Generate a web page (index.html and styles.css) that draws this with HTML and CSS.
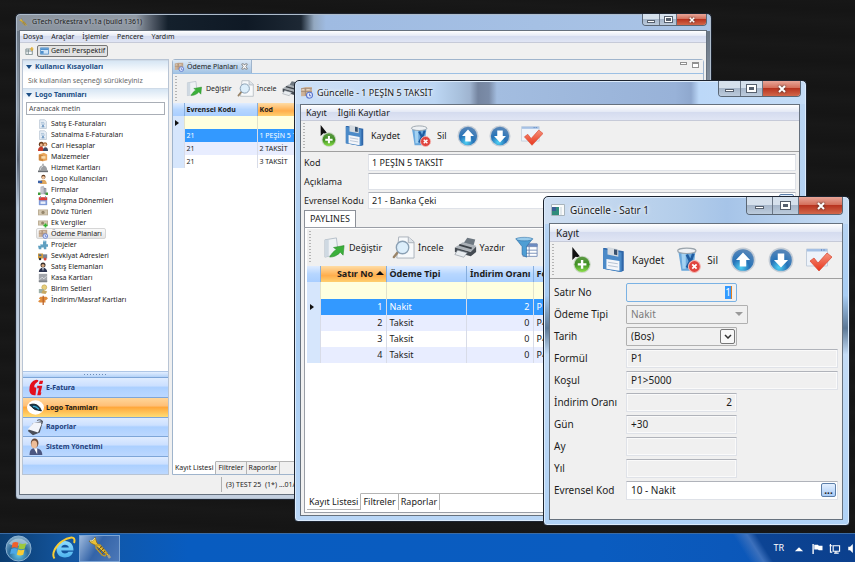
FILE: index.html
```html
<!DOCTYPE html>
<html lang="tr">
<head>
<meta charset="utf-8">
<title>GTech Orkestra v1.1a (build 1361)</title>
<link rel="stylesheet" href="styles.css">
</head>
<body>
<svg class="defs" aria-hidden="true">
  <defs>
    <radialGradient id="gOrb" cx=".4" cy=".85" r=".8"><stop offset="0" stop-color="#4fd0f4"/><stop offset=".5" stop-color="#2673b8"/><stop offset="1" stop-color="#5585b8"/></radialGradient>
    <linearGradient id="gGreen" x1="0" y1="0" x2="0" y2="1"><stop offset="0" stop-color="#5d9a45"/><stop offset=".5" stop-color="#3f8f22"/><stop offset="1" stop-color="#8ade4a"/></linearGradient>
    <linearGradient id="gRed" x1="0" y1="0" x2="0" y2="1"><stop offset="0" stop-color="#f5917c"/><stop offset="1" stop-color="#e8361c"/></linearGradient>
    <radialGradient id="gStart" cx=".5" cy=".75" r=".7"><stop offset="0" stop-color="#62c6e8"/><stop offset=".55" stop-color="#2c6c9c"/><stop offset="1" stop-color="#7fa9c6"/></radialGradient>
    <linearGradient id="gE" x1="0" y1="0" x2="0" y2="1"><stop offset="0" stop-color="#8fdcff"/><stop offset="1" stop-color="#4fb4ee"/></linearGradient>
  </defs>
  <symbol id="i-new" viewBox="0 0 24 24"><path d="M4 0v12l3-3 5 1z" fill="#111"/><circle cx="13" cy="16" r="8" fill="#c9d6c4"/><circle cx="13" cy="16" r="7" fill="url(#gGreen)"/><path d="M13 12v8M9 16h8" stroke="#fff" stroke-width="2.2"/></symbol>
  <symbol id="i-save" viewBox="0 0 24 24"><path d="M2 1h2l17 3v18l-3 1L2 20z" fill="#2f66a8"/><path d="M2 2l17 3v18L2 20z" fill="#4b8ac8"/><path d="M6 0l10 2v7L6 7z" fill="#d4dae0"/><path d="M12 2l3 .5v5l-3-.5z" fill="#38506c"/><path d="M5 11l12 2v9L5 20z" fill="#f4f6fa"/><path d="M6.500 14l9 1.500M6.500 17l9 1.500" stroke="#b8c4d4"/></symbol>
  <symbol id="i-trash" viewBox="0 0 24 24"><path d="M2 3h16l-2 19H5z" fill="#6aa8dc"/><path d="M5 6h4v14H6z" fill="#a4d2f2"/><path d="M10 7l3 6-3 6M16 6l-4 12" stroke="#1f5ca0" stroke-width="2.400" fill="none"/><ellipse cx="10" cy="3.500" rx="8.500" ry="2.500" fill="#eef1f4" stroke="#9aa4ac"/><circle cx="17" cy="18" r="5.500" fill="#e0443e" stroke="#f4b8b4"/><path d="M15 16l4 4M19 16l-4 4" stroke="#fff" stroke-width="1.600"/></symbol>
  <symbol id="i-up" viewBox="0 0 24 24"><circle cx="12" cy="12" r="11.500" fill="#c5cdd6"/><circle cx="12" cy="12" r="10" fill="url(#gOrb)"/><path d="M12 5l6.500 7H15v6H9v-6H5.500z" fill="#fff"/></symbol>
  <symbol id="i-down" viewBox="0 0 24 24"><circle cx="12" cy="12" r="11.500" fill="#c5cdd6"/><circle cx="12" cy="12" r="10" fill="url(#gOrb)"/><path d="M12 19l6.500-7H15V6H9v6H5.500z" fill="#fff"/></symbol>
  <symbol id="i-check" viewBox="0 0 26 24"><path d="M.5 1h21v17H.5z" fill="#eef3fa" stroke="#c3cedc"/><path d="M1 1h20v2.500H1z" fill="#a5c0e4"/><path d="M15 2h1M17.500 2h1" stroke="#3c6db0"/><path d="M4 13l4-3 4 5 9-10 5 4-13 14z" fill="url(#gRed)" stroke="#d8452e" stroke-width=".7"/></symbol>
  <symbol id="i-edit" viewBox="0 0 24 24"><path d="M2 4l12-2 2 17-14 3z" fill="#eff2f5" stroke="#b4bec8"/><path d="M2 4h4v17l-4 1z" fill="#cfd9e2"/><path d="M7 22c2-4 4-6 7-8l-3-2 11-2-1 10-3-3c-3 3-6 5-11 5z" fill="#3bb03a" stroke="#2a8a2c" stroke-width=".6"/></symbol>
  <symbol id="i-view" viewBox="0 0 24 24"><path d="M7 1h10l6 5v17H5z" fill="#f7f9fb" stroke="#a9b1ba"/><path d="M17 1v6h6" fill="#dde3e9" stroke="#a9b1ba"/><path d="M6 17l-4 5" stroke="#9a8468" stroke-width="2.500" stroke-linecap="round"/><circle cx="11" cy="12" r="6.500" fill="#d8ecfb" fill-opacity=".9" stroke="#8aa0b4" stroke-width="1.400"/></symbol>
  <symbol id="i-print" viewBox="0 0 26 24"><path d="M11 7l4-6 9 2-2 7z" fill="#6d7780"/><path d="M1 12l9-6 15 4-5 7z" fill="#aab0b6"/><path d="M6 9l14 4" stroke="#3b4147" stroke-width="2"/><path d="M1 12l18 5 6-6v6l-6 5-18-5z" fill="#454b52"/><path d="M4 15l11 3-4 5-10-3z" fill="#e8ecef" stroke="#88919a" stroke-width=".7"/></symbol>
  <symbol id="i-filter" viewBox="0 0 26 24"><path d="M9 8h16v14H9z" fill="#fff" stroke="#7088b4"/><path d="M9 8h16v3H9zM9 15h16M9 18.500h16M16 8v14" fill="#6b8cc4" stroke="#7088b4"/><path d="M1 2h19l-7 9v12l-5-3v-9z" fill="#4f9ed4" stroke="#2a6ca4" stroke-width=".7"/><ellipse cx="10.500" cy="2.500" rx="9.500" ry="2" fill="#9accec" stroke="#2a6ca4" stroke-width=".6"/></symbol>
  <symbol id="i-plan" viewBox="0 0 12 12"><path d="M1 2l4-1h6v8l-10 .500z" fill="#cdb196"/><path d="M1 5h10M5 2v7M1 2.500h10" stroke="#9c8470" stroke-width=".7"/><path d="M2 3h2v1H2zM6 3h3v1H6z" fill="#f0e4d4"/><circle cx="8.800" cy="8.500" r="2.800" fill="#dfe6fa" stroke="#5c78d0"/><path d="M8.800 7v2h1.500" stroke="#3c58b8" stroke-width=".7" fill="none"/></symbol>
  <symbol id="i-doc" viewBox="0 0 12 12"><path d="M2 1h6l2 2v8.500H2z" fill="#eef4fa" stroke="#a8b8c8" stroke-width=".8"/><path d="M3.500 4h4M3.500 6h5M3.500 9.500h5" stroke="#9ab6d0"/><path d="M5 7h2v3H5z" fill="#6b95c0"/></symbol>
  <symbol id="i-people" viewBox="0 0 12 12"><circle cx="4" cy="4" r="3" fill="#6b3c1c"/><circle cx="4" cy="4.700" r="1.700" fill="#f0b890"/><circle cx="8.500" cy="4" r="2.500" fill="#a4622e"/><circle cx="8.500" cy="4.600" r="1.500" fill="#f2c49c"/><path d="M0 12c0-4 2-5 4-5s3 2 3 5z" fill="#c83c2c"/><path d="M6 12c0-3 1-4.500 3-4.500s3 1.500 3 4.500z" fill="#3c4a64"/></symbol>
  <symbol id="i-box" viewBox="0 0 12 12"><path d="M1 3l6-2 4 2v7l-5 1-5-1z" fill="#e9a55c"/><path d="M1 3l5 1v7l-5-1z" fill="#cc8840"/><path d="M4 5h5v3H4z" fill="#f8dcb0"/></symbol>
  <symbol id="i-bell" viewBox="0 0 12 12"><path d="M1 9c0-4 2-6 5-6s5 2 5 6z" fill="#9a9ea2"/><path d="M3 8c0-2 1-4 3-4" stroke="#e4e6e8" fill="none"/><path d="M0 9h12v2H0z" fill="#6a6e73"/><path d="M5.500 1h1v2h-1z" fill="#55595e"/></symbol>
  <symbol id="i-user" viewBox="0 0 12 12"><circle cx="6.500" cy="3.500" r="2.500" fill="#5e3a20"/><circle cx="6.500" cy="4.200" r="1.900" fill="#f0c49c"/><path d="M2 12c0-4 2-5 4.500-5s4 2 4 5z" fill="#e0a860"/><path d="M0 8h5v3H0z" fill="#3c62a8"/></symbol>
  <symbol id="i-firm" viewBox="0 0 12 12"><path d="M3 2l4-1v10H3z" fill="#b4b6c0"/><path d="M7 3l3 1v7H7z" fill="#8e909c"/><path d="M4 3v7M5.500 3v7M8.500 5v5" stroke="#dfe0e8" stroke-width=".6"/><path d="M0 9h3v3H0zM9 9h3v3H9z" fill="#3f9a3a"/></symbol>
  <symbol id="i-cal" viewBox="0 0 12 12"><path d="M1 2h10v9H1z" fill="#7e9ad8"/><path d="M1 1.500h10v3.500H1z" fill="#de3c36"/><path d="M3 6.500h6v3H3z" fill="#e8eefa"/><path d="M3 0v3M9 0v3" stroke="#8c8c98"/></symbol>
  <symbol id="i-money" viewBox="0 0 12 12"><path d="M0 3h12v7H0z" fill="#b9ab92"/><path d="M1 4h10v5H1z" fill="#d5c9b2"/><circle cx="6" cy="6.500" r="2" fill="#96866c"/></symbol>
  <symbol id="i-moneyadd" viewBox="0 0 12 12"><path d="M0 3h12v6H0z" fill="#b9ab92"/><path d="M1 4h10v4H1z" fill="#d5c9b2"/><circle cx="5.500" cy="6" r="1.800" fill="#96866c"/><path d="M9 6.500v5M6.500 9h5" stroke="#2fb32c" stroke-width="2"/></symbol>
  <symbol id="i-puzzle" viewBox="0 0 12 12"><path d="M0 7h3V5h3V1h4v4h2v3h-2v3H7V9H4v2H1z" fill="#5f9fc0"/><path d="M6 1.500h3M3 5.500h3" stroke="#a8d0e4"/></symbol>
  <symbol id="i-truck" viewBox="0 0 12 12"><path d="M0 3h6v6H0z" fill="#d09a3a"/><path d="M6 4h5v5H6z" fill="#7c8494"/><path d="M1 4h3v2H1z" fill="#4c6c9c"/><circle cx="2.500" cy="9.500" r="1.500" fill="#333"/><circle cx="8.500" cy="9.500" r="1.800" fill="#d8483c"/></symbol>
  <symbol id="i-agent" viewBox="0 0 12 12"><circle cx="6" cy="3.500" r="3" fill="#3a302c"/><circle cx="6" cy="4.200" r="1.900" fill="#d8a880"/><path d="M1 12c0-3 2-5 5-5s5 2 5 5z" fill="#2c3450"/><path d="M5 7h2l-1 4z" fill="#e8ecf4"/></symbol>
  <symbol id="i-safe" viewBox="0 0 12 12"><path d="M1 1h10v10H1z" fill="#a3a6ac"/><path d="M2 8l3-3 2 2 3-3" stroke="#e4e6ea" fill="none"/><path d="M1 9h10v2H1z" fill="#80848a"/></symbol>
  <symbol id="i-units" viewBox="0 0 12 12"><circle cx="7.500" cy="4" r="3" fill="#e8cf7c" stroke="#b49848" stroke-width=".6"/><path d="M1 6h6v5H1z" fill="#9db0a8"/><path d="M6 7l5 2-2 3-5-1z" fill="#c8a860"/></symbol>
  <symbol id="i-sign" viewBox="0 0 12 12"><path d="M1 4l2-2h7l2 2-2 2H3zM0 7.500l2-1.500h7v3H2z" fill="#e08c3c"/><path d="M5.500 1h1.500v11H5.500z" fill="#b8622c"/></symbol>
  <symbol id="i-trumpet" viewBox="0 0 24 24"><path d="M1 5c3 1 6-1 6-4 1 2 1 4 2 6l12 12-1 1L7 9C5 8 2 7 1 5z" fill="#e8c038" stroke="#7a5c14" stroke-width=".6"/><path d="M2 5c2 0 4-1 5-3" stroke="#fff0a0" fill="none"/><path d="M8 9l4 0 7 8-2 3-3-1-6-7z" fill="none" stroke="#c29a28" stroke-width="1.300"/><path d="M10 14l4-4M12 16l4-4M14 18l3-3" stroke="#7a5c14"/><path d="M20 19l2 3" stroke="#a8a48c" stroke-width="2.500"/></symbol>
</svg>

<main class="desktop">
  <section class="window main-win" aria-label="GTech Orkestra">
    <header class="titlebar">
      <svg class="ticon"><use href="#i-trumpet"/></svg>
      <h1>GTech Orkestra v1.1a (build 1361)</h1>
      <div class="caption"><button aria-label="Küçült"><i class="min"></i></button><button aria-label="Büyüt"><i class="max"></i></button><button class="close" aria-label="Kapat"><svg viewBox="0 0 10 8"><path d="M2 1l6 6M8 1L2 7"/></svg></button></div>
    </header>
    <div class="client">
      <nav class="menubar"><button>Dosya</button><button>Araçlar</button><button>İşlemler</button><button>Pencere</button><button>Yardım</button></nav>
      <div class="perspectives">
        <button class="persp-add" aria-label="Perspektif aç"><svg viewBox="0 0 10 10"><path d="M.5 2.500h8v7h-8zM.5 5h8M3.500 3v6" fill="#f6f9fc" stroke="#6d7f80"/><path d="M8 0v5M5.500 2.500h4.500" stroke="#e8b02c" stroke-width="1.500"/></svg></button>
        <button class="persp-on"><svg viewBox="0 0 10 8"><path d="M.5.5h9v7h-9z" fill="#cfe4f8" stroke="#5c94c8"/><path d="M1 1h8v2H1zM1 4h3v3H1z" fill="#4f90cc"/></svg>Genel Perspektif</button>
      </div>
      <div class="workbench">
        <aside class="sidebar">
          <h2>Kullanıcı Kısayolları</h2>
          <p>Sık kullanılan seçeneği sürükleyiniz</p>
          <h2>Logo Tanımları</h2>
          <input class="search" type="text" aria-label="Ara" placeholder="Aranacak metin">
          <ul class="tree">
            <li><a href="#"><svg><use href="#i-doc"/></svg>Satış E-Faturaları</a></li>
            <li><a href="#"><svg><use href="#i-doc"/></svg>Satınalma E-Faturaları</a></li>
            <li><a href="#"><svg><use href="#i-people"/></svg>Cari Hesaplar</a></li>
            <li><a href="#"><svg><use href="#i-box"/></svg>Malzemeler</a></li>
            <li><a href="#"><svg><use href="#i-bell"/></svg>Hizmet Kartları</a></li>
            <li><a href="#"><svg><use href="#i-user"/></svg>Logo Kullanıcıları</a></li>
            <li><a href="#"><svg><use href="#i-firm"/></svg>Firmalar</a></li>
            <li><a href="#"><svg><use href="#i-cal"/></svg>Çalışma Dönemleri</a></li>
            <li><a href="#"><svg><use href="#i-money"/></svg>Döviz Türleri</a></li>
            <li><a href="#"><svg><use href="#i-moneyadd"/></svg>Ek Vergiler</a></li>
            <li><a href="#" class="on"><svg><use href="#i-plan"/></svg>Ödeme Planları</a></li>
            <li><a href="#"><svg><use href="#i-puzzle"/></svg>Projeler</a></li>
            <li><a href="#"><svg><use href="#i-truck"/></svg>Sevkiyat Adresleri</a></li>
            <li><a href="#"><svg><use href="#i-agent"/></svg>Satış Elemanları</a></li>
            <li><a href="#"><svg><use href="#i-safe"/></svg>Kasa Kartları</a></li>
            <li><a href="#"><svg><use href="#i-units"/></svg>Birim Setleri</a></li>
            <li><a href="#"><svg><use href="#i-sign"/></svg>İndirim/Masraf Kartları</a></li>
          </ul>
          <div class="grip"></div>
          <nav class="stack">
            <button><svg viewBox="0 0 20 20"><path d="M11 1c2 0 3 1 2 2-4 3-5 5-4 7h2l-1 9c-5 1-8-3-7-8 0-5 3-9 8-10z" fill="#e30f1c"/><path d="M12 8h6l-2 8h1l-1 3h-4l2-8h-2zM15 2h4l-1 4h-4z" fill="#e30f1c"/></svg>E-Fatura</button>
            <button class="on"><svg viewBox="0 0 20 20"><ellipse cx="10" cy="10" rx="10" ry="8.500" fill="#fff"/><path d="M3 7c4-2 9-1 12 3l2 4-5-1C8 13 6 9 3 7z" fill="#173a50" stroke="#101c24"/><path d="M7 9c3-1 5 1 7 3" stroke="#3ab0d8" stroke-width="1.500" fill="none"/></svg>Logo Tanımları</button>
            <button><svg viewBox="0 0 20 20"><path d="M1 14l6-9 12-3-4 14-8 3z" fill="#4a4e58"/><path d="M1 12l7-8 10 0-5 12z" fill="#f3f5fa"/><path d="M12 2c2-2 5-1 6 1l-1 3" stroke="#5a5e68" stroke-width="1.300" fill="none"/></svg>Raporlar</button>
            <button><svg viewBox="0 0 20 20"><path d="M3 20c0-6 2-8 7-8s8 3 8 8z" fill="#4b5680"/><path d="M8 12h4v7z" fill="#fff"/><ellipse cx="9" cy="6" rx="4.500" ry="5.500" fill="#6a4a38"/><ellipse cx="8.500" cy="7.500" rx="3.500" ry="4.500" fill="#eebd98"/></svg>Sistem Yönetimi</button>
            <div class="rest"></div>
          </nav>
        </aside>
        <section class="editor">
          <div class="etabs">
            <div class="etab"><svg><use href="#i-plan"/></svg><span>Ödeme Planları</span><button aria-label="Sekmeyi kapat"><svg viewBox="0 0 8 8"><path d="M1 1l2 0 1 1.500L5 1h2v1L5.500 4 7 6v1H5L4 5.500 3 7H1V6l1.500-2L1 2z"/></svg></button></div>
            <div class="pane-btns"><i></i><i class="big"></i></div>
          </div>
          <div class="toolbar">
            <button><svg><use href="#i-edit"/></svg>Değiştir</button>
            <button><svg><use href="#i-view"/></svg>İncele</button>
            <button aria-label="Yazdır"><svg><use href="#i-print"/></svg></button>
          </div>
          <div class="gridwrap">
            <table class="grid">
              <colgroup><col class="c-g"><col class="c-1"><col></colgroup>
              <thead><tr><th></th><th>Evrensel Kodu</th><th class="sorted">Kod</th></tr></thead>
              <tbody>
                <tr class="filter"><td class="cur"></td><td></td><td></td></tr>
                <tr class="sel"><td></td><td>21</td><td>1 PEŞİN 5 TAKSİT</td></tr>
                <tr class="alt"><td></td><td>21</td><td>2 TAKSİT</td></tr>
                <tr><td></td><td>21</td><td>3 TAKSİT</td></tr>
              </tbody>
            </table>
          </div>
          <nav class="btabs"><button class="on">Kayıt Listesi</button><button>Filtreler</button><button>Raporlar</button></nav>
        </section>
      </div>
      <footer class="status"><span>(3) TEST 25&nbsp; (1*) ...01/01</span></footer>
    </div>
  </section>

  <section class="window plan-win" aria-label="Güncelle - 1 PEŞİN 5 TAKSİT">
    <header class="titlebar">
      <svg class="ticon"><use href="#i-plan"/></svg>
      <h1>Güncelle - 1 PEŞİN 5 TAKSİT</h1>
      <div class="caption"><button aria-label="Küçült"><i class="min"></i></button><button aria-label="Büyüt"><i class="max"></i></button><button class="close" aria-label="Kapat"><svg viewBox="0 0 10 8"><path d="M2 1l6 6M8 1L2 7"/></svg></button></div>
    </header>
    <div class="client">
      <nav class="menubar"><button>Kayıt</button><button>İlgili Kayıtlar</button></nav>
      <div class="toolbar">
        <button aria-label="Yeni"><svg><use href="#i-new"/></svg></button>
        <button><svg><use href="#i-save"/></svg>Kaydet</button>
        <button><svg><use href="#i-trash"/></svg>Sil</button>
        <button aria-label="Önceki"><svg><use href="#i-up"/></svg></button>
        <button aria-label="Sonraki"><svg><use href="#i-down"/></svg></button>
        <button aria-label="Onayla"><svg><use href="#i-check"/></svg></button>
      </div>
      <form class="fields">
        <label for="p-kod">Kod</label><input id="p-kod" type="text" value="1 PEŞİN 5 TAKSİT">
        <label for="p-ack">Açıklama</label><input id="p-ack" type="text">
        <label for="p-evr">Evrensel Kodu</label><div class="lookup"><input id="p-evr" type="text" value="21 - Banka Çeki"><button type="button" aria-label="Seç">...</button></div>
      </form>
      <nav class="ttabs"><button class="on">PAYLINES</button></nav>
      <div class="panel">
        <div class="toolbar">
          <button><svg><use href="#i-edit"/></svg>Değiştir</button>
          <button><svg><use href="#i-view"/></svg>İncele</button>
          <button><svg><use href="#i-print"/></svg>Yazdır</button>
          <button aria-label="Filtre"><svg><use href="#i-filter"/></svg></button>
        </div>
        <div class="gridwrap">
          <table class="grid">
            <colgroup><col class="c-g"><col class="c-1"><col class="c-2"><col class="c-3"><col></colgroup>
            <thead><tr><th></th><th class="sorted num">Satır No <b class="asc"></b></th><th>Ödeme Tipi</th><th class="num">İndirim Oranı</th><th>Formül</th></tr></thead>
            <tbody>
              <tr class="filter"><td></td><td></td><td></td><td></td><td></td></tr>
              <tr class="sel"><td class="cur"></td><td class="num">1</td><td>Nakit</td><td class="num">2</td><td>P1</td></tr>
              <tr class="alt"><td></td><td class="num">2</td><td>Taksit</td><td class="num">0</td><td>P4</td></tr>
              <tr><td></td><td class="num">3</td><td>Taksit</td><td class="num">0</td><td>P4</td></tr>
              <tr class="alt"><td></td><td class="num">4</td><td>Taksit</td><td class="num">0</td><td>P4</td></tr>
            </tbody>
          </table>
        </div>
        <nav class="btabs"><button class="on">Kayıt Listesi</button><button>Filtreler</button><button>Raporlar</button></nav>
      </div>
    </div>
  </section>

  <section class="window line-win" aria-label="Güncelle - Satır 1">
    <header class="titlebar">
      <svg class="ticon" viewBox="0 0 14 12"><path d="M.5.500h13v11H.5z" fill="#f8fafa" stroke="#a8b4bc"/><path d="M1 3h7v8H1z" fill="#2f8c7c"/><path d="M1 3h4v4H1z" fill="#3a5c94"/><path d="M10 3v8" stroke="#c8d4dc"/></svg>
      <h1>Güncelle - Satır 1</h1>
      <div class="caption"><button aria-label="Küçült"><i class="min"></i></button><button aria-label="Büyüt"><i class="max"></i></button><button class="close" aria-label="Kapat"><svg viewBox="0 0 10 8"><path d="M2 1l6 6M8 1L2 7"/></svg></button></div>
    </header>
    <div class="client">
      <nav class="menubar"><button>Kayıt</button></nav>
      <div class="toolbar">
        <button aria-label="Yeni"><svg><use href="#i-new"/></svg></button>
        <button><svg><use href="#i-save"/></svg>Kaydet</button>
        <button><svg><use href="#i-trash"/></svg>Sil</button>
        <button aria-label="Önceki"><svg><use href="#i-up"/></svg></button>
        <button aria-label="Sonraki"><svg><use href="#i-down"/></svg></button>
        <button aria-label="Onayla"><svg><use href="#i-check"/></svg></button>
      </div>
      <form class="fields">
        <label for="l-no">Satır No</label><div class="focus short"><input id="l-no" class="num" type="text" value="1" size="1"></div>
        <label for="l-tip">Ödeme Tipi</label><div class="pick mid off"><select id="l-tip" disabled><option>Nakit</option></select><svg viewBox="0 0 8 4"><path d="M0 0h8L4 4z" fill="#9a9a9a"/></svg></div>
        <label for="l-tarih">Tarih</label><div class="pick short"><select id="l-tarih"><option>(Boş)</option></select><span><svg viewBox="0 0 8 5"><path d="M1 1l3 3 3-3" fill="none" stroke="#333" stroke-width="1.500"/></svg></span></div>
        <label for="l-for">Formül</label><input id="l-for" type="text" value="P1" readonly>
        <label for="l-kos">Koşul</label><input id="l-kos" type="text" value="P1&gt;5000" readonly>
        <label for="l-ind">İndirim Oranı</label><input id="l-ind" class="short num" type="text" value="2" readonly>
        <label for="l-gun">Gün</label><input id="l-gun" class="short" type="text" value="+30" readonly>
        <label for="l-ay">Ay</label><input id="l-ay" class="short" type="text" readonly>
        <label for="l-yil">Yıl</label><input id="l-yil" class="short" type="text" readonly>
        <label for="l-evr">Evrensel Kod</label><div class="lookup"><input id="l-evr" type="text" value="10 - Nakit"><button type="button" aria-label="Seç">...</button></div>
      </form>
    </div>
  </section>
</main>

<footer class="taskbar">
  <button class="start" aria-label="Başlat"><svg viewBox="0 0 28 28"><circle cx="14" cy="14" r="13" fill="url(#gStart)" stroke="#8fb4d4"/><path d="M4 9a12 12 0 0 1 20 0c-6 3-14 3-20 0z" fill="#c4dcea" opacity=".6"/><path d="M8 8c2-1 4-1 6 0l-1.200 5.500c-2-1-4-1-6 0z" fill="#f0602c"/><path d="M15 8.500c2 1 4 1 7 0l-1.400 5.500c-2 1-4.500 1-6.800 0z" fill="#9cc83c"/><path d="M6.500 14.500c2-1 4-1 6 0l-1.200 5.500c-2-1-4-1-6 0z" fill="#4ca8e8"/><path d="M13.500 15c2 1 4 1 6.800 0l-1.400 5.500c-2 1-4.300 1-6.600 0z" fill="#f8cc34"/></svg></button>
  <button class="ie" aria-label="Internet Explorer"><svg viewBox="0 0 24 24"><path d="M21.500 14.500H9.200c.3 2 1.800 3 3.800 3 1.600 0 2.700-.6 3.400-1.700h4.700C20 19.600 17 21.500 13 21.500c-5.200 0-8.500-3.300-8.500-8.200C4.500 8.500 8 5 13 5c5.200 0 8.700 3.600 8.500 9.500zM9.300 11.500h7.600C16.500 9.700 15 8.700 13 8.700s-3.300 1-3.700 2.800z" fill="url(#gE)"/><path d="M2.500 22.500C-1 18 4 9 10.500 5 16 1.500 22 0 22.500 4c0 1 0 2-.5 3" fill="none" stroke="#f8cc34" stroke-width="2"/></svg></button>
  <button class="task" aria-label="GTech Orkestra"><svg><use href="#i-trumpet"/></svg></button>
  <div class="tray"><span>TR</span>
    <svg viewBox="0 0 8 8"><path d="M1 6l3-3 3 3z"/></svg>
    <svg viewBox="0 0 12 12"><path d="M1 1h1.500v11H1zM3 2h4l1 1h4v5H8L7 7H3z"/></svg>
    <svg viewBox="0 0 12 12"><path d="M4 3h7v6H4zM7 9v2M5 11h5M1 1v9h2M0 3h3" fill="none" stroke="#fff" stroke-width="1.200"/></svg>
    <svg viewBox="0 0 8 12"><path d="M1 4h2l3-3v10L3 8H1z"/></svg>
  </div>
</footer>
</body>
</html>
```
FILE: styles.css
```css
* { box-sizing: border-box; margin: 0; padding: 0; }
html, body { height: 100%; }
body {
  display: flex; flex-direction: column; overflow: hidden;
  background: #161616; color: #1c1c1c;
  font: 7px/10px "Noto Sans", "Open Sans", sans-serif;
}
button, input, select { font: inherit; color: inherit; background: none; border: 0; appearance: none; }
a { color: inherit; text-decoration: none; }
ul { list-style: none; }
svg { display: block; flex: none; }
.defs { position: absolute; width: 0; height: 0; }

.desktop {
  flex: 1; position: relative; min-height: 0;
  background: repeating-linear-gradient(3deg, #161616 0, #181818 9px, #151515 20px, #161616 26px);
}

/* window frame */
.window {
  position: absolute; display: flex; flex-direction: column;
  border: 1px solid #1d2430; border-radius: 5px 5px 4px 4px;
  box-shadow: inset 0 0 0 1px #dcebfb;
  padding: 0 6px 5px 5px;
  background: #b5d2f3;
}
.main-win { inset: 13px 143px 33px 15px; padding: 0 4px 4px 3px;
  box-shadow: inset 0 0 0 1px #aebccb;
  background: linear-gradient(90deg, #8b949f 0, #8f98a3 120px, #49525f 138px, #14202c 152px, #0f1925 230px, #1d2834 285px, #93a8c0 298px, #9fbbe2 310px, #a5c0e4 75%, #aac4e6 100%) 0 0 / 100% 17px no-repeat,
    linear-gradient(#64707e 0, #8e9aa8 20%, #566070 30%, #b9c9dc 40%, #c3cfdf 100%); }
.plan-win { inset: 80px 48px 11px 294px; font-size: 9px;
  background: linear-gradient(90deg, #cde0f6 0, #bcd6f3 140px, #a8c0dc 165px, #9fb4d0 175px, #7585a0 183px, #7b8ca8 194px, #a3bde0 202px, #98b2d8 380px, #8fa8ce 396px, #bcd8f8 404px, #c4dcf6 100%) 0 0 / 100% 23px no-repeat,
    linear-gradient(#bcd6f3, #a8cdf4 60%, #b9d6f6); }
.line-win { inset: 196px 5px 7px 543px; font-size: 10px;
  background: linear-gradient(90deg, #cfdff2 0, #b3cdea 45%, #a6c4e8 60%, #c8ddf4 100%) 0 0 / 100% 27px no-repeat,
    linear-gradient(#bcd6f3 0, #a8cdf4 30%, #5c7896 40%, #c4dcf6 48%, #b0d2f6 100%); }
.titlebar { display: flex; align-items: center; gap: 4px; flex: none; height: 16px; }
.plan-win .titlebar { height: 23px; }
.line-win .titlebar { height: 26px; gap: 5px; }
.titlebar h1 { flex: 1; font-size: inherit; font-weight: 400; text-shadow: 0 0 3px #fff, 0 0 5px #fff; }
.ticon { width: 9px; height: 9px; }
.main-win .titlebar h1 { text-shadow: 0 0 3px #c6ccd4; }
.plan-win .ticon { width: 13px; height: 13px; }
.line-win .ticon { width: 14px; height: 12px; margin-left: 2px; }
.caption { display: flex; align-self: flex-start; border: 1px solid #5a6674; border-top: 0; border-radius: 0 0 4px 4px; overflow: hidden; }
.caption button {
  display: flex; align-items: center; justify-content: center; width: 17px; height: 11px;
  border-right: 1px solid #6a7686;
  background: linear-gradient(#d5e0ec 0 45%, #a6b6ca 50%, #bccbdc);
}
.caption .close { width: 29px; border-right: 0; background: linear-gradient(#e8a598 0, #d4705c 45%, #b83420 50%, #d2674a); }
.plan-win .caption { margin-right: -1px; }
.plan-win .caption button { width: 22px; height: 15px; }
.plan-win .caption .close { width: 37px; }
.line-win .caption button { width: 26px; height: 17px; }
.line-win .caption .close { width: 43px; }
.caption .min { width: 9px; height: 3px; margin-top: 3px; background: #fff; border: 1px solid #56606e; }
.caption .max { width: 9px; height: 7px; background: #56606e; border: 2px solid #fff; outline: 1px solid #56606e; }
.main-win .caption .min { width: 8px; }
.main-win .caption .max { width: 7px; height: 5px; border-width: 1px; }
.caption svg { width: 10px; height: 8px; stroke: #fff; stroke-width: 2; fill: none; filter: drop-shadow(0 0 1px #333); }
.main-win .caption svg { width: 8px; height: 6px; }
.client { flex: 1; min-height: 0; display: flex; flex-direction: column; background: #f0f0f0; border: 1px solid #66717e; }

.menubar { flex: none; display: flex; height: 12px; padding-left: 3px; gap: 8px; background: linear-gradient(#fff 0, #e4e9f5 45%, #d5dcef 50%, #e0e5f4); border-bottom: 1px solid #c6cad8; }
.plan-win .menubar { height: 16px; padding-left: 5px; gap: 11px; }
.line-win .menubar { height: 18px; padding-left: 6px; }

/* toolbars */
.toolbar { flex: none; display: flex; align-items: center; }
.toolbar::before { content: ""; width: 2px; align-self: stretch; margin: 2px; background: repeating-linear-gradient(#b4b4b4 0 1px, transparent 1px 3px); }
.toolbar button { display: flex; align-items: center; gap: 5px; }
.plan-win .client > .toolbar svg { width: 22px; height: 22px; }
.plan-win .client > .toolbar { height: 31px; gap: 10px; border-bottom: 1px solid #a0a0a0; }
.line-win .toolbar svg { width: 26px; height: 26px; }
.line-win .toolbar { height: 37px; gap: 12px; border-bottom: 1px solid #a0a0a0; }
.plan-win .client > .toolbar button:first-of-type, .line-win .toolbar button:first-of-type { margin-right: -5px; }

/* main window */
.perspectives { flex: none; display: flex; align-items: center; gap: 3px; height: 16px; padding-left: 5px; }
.perspectives svg { width: 9px; height: 8px; }
.persp-on { display: flex; align-items: center; gap: 2px; height: 12px; padding: 0 2px; border: 1px solid #777; border-radius: 2px; background: #e2e2e2; }
.workbench { flex: 1; min-height: 0; display: flex; gap: 3px; padding: 0 2px; }
.sidebar { flex: none; width: 147px; display: flex; flex-direction: column; background: #fff; border: 1px solid #b8c4d4; }
.sidebar h2 { flex: none; height: 13px; padding-left: 12px; font-size: 7px; line-height: 11px; color: #1c4f86; background: linear-gradient(#d7e6f4, #fff); border-top: 1px solid #cfdbe8; position: relative; }
.sidebar h2::before { content: ""; position: absolute; left: 3px; top: 4px; border: 3px solid transparent; border-top: 4px solid #1c4f86; border-bottom: 0; }
.sidebar p { flex: none; height: 15px; padding-left: 5px; line-height: 16px; color: #6a6a6a; }
.search { flex: none; height: 13px; margin: 1px 3px 3px; padding: 0 2px; border: 1px solid #a9aeb6; background: #fff; }
.search::placeholder { color: #4c4c4c; opacity: 1; }
.tree { flex: 1; min-height: 0; overflow: hidden; padding-left: 13px; }
.tree li { height: 11px; display: flex; }
.tree a { display: flex; align-items: center; gap: 3px; padding: 0 3px 0 1px; border: 1px solid transparent; }
.tree a.on { background: linear-gradient(#fafafa, #e6e6e6); border-color: #d6d6d6; border-radius: 2px; }
.tree svg { width: 10px; height: 10px; }
.grip { flex: none; height: 6px; background: radial-gradient(circle at center, #6b8cb8 1px, transparent 1px) 0 0 / 3px 100%, linear-gradient(#e3efff, #b4d2f8); background-clip: content-box, border-box; padding: 1px 60px; border-top: 1px solid #aec6e6; }
.stack { flex: none; display: grid; grid-template-rows: 20px 20px 19px 20px 18px; }
.stack > * { display: flex; align-items: center; gap: 2px; padding-left: 4px; font-weight: 700; color: #1f3f7c; border-top: 1px solid #7ea6d8; background: linear-gradient(#dfecff 0, #cce0ff 40%, #acd0ff 50%, #bcd8ff); }
.stack .on { color: #1c1c1c; background: linear-gradient(#ffd69a 0, #ffc078 40%, #ffa83c 50%, #ffdc74); }
.stack svg { width: 17px; height: 19px; }
.editor { flex: 1; min-width: 0; display: flex; flex-direction: column; background: #fff; border: 1px solid #9fb4cc; border-radius: 3px 3px 0 0; }
.etabs { flex: none; display: flex; justify-content: space-between; height: 14px; background: #f0f0f0; border-bottom: 1px solid #9cc0e4; }
.etab { display: flex; align-items: center; gap: 3px; padding: 0 3px 0 1px; background: linear-gradient(#dce9f6, #a4c4e4); border-right: 1px solid #9fb4cc; }
.etab svg { width: 10px; height: 10px; }
.etab button svg { width: 7px; height: 7px; fill: #fff; stroke: #666; stroke-width: .8; }
.pane-btns { display: flex; gap: 5px; padding: 2px 4px; }
.pane-btns i { width: 7px; height: 3px; border: 1px solid #909090; background: #fff; }
.pane-btns .big { height: 6px; border-top-width: 2px; }
.editor .toolbar { height: 29px; gap: 5px; background: #f0f0f0; }
.editor .toolbar button:first-of-type { margin-left: 2px; }
.editor .toolbar button { gap: 3px; }
.editor .toolbar svg { width: 17px; height: 17px; }
.gridwrap { flex: 1; min-height: 0; overflow: hidden; background: #fff; }
.status { flex: none; height: 19px; padding: 2px 0 2px 201px; }
.status span { display: block; height: 15px; line-height: 15px; padding-left: 4px; border-left: 1px solid #b0b0b0; }

/* grids */
.grid { width: 100%; table-layout: fixed; border-collapse: collapse; }
.grid th, .grid td { height: 13px; padding: 0 2px; text-align: left; white-space: nowrap; overflow: hidden; border-right: 1px solid #d8dce8; line-height: 10px; }
.grid .num { text-align: right; }
.grid th { background: linear-gradient(#dfecff, #b6d6ff 50%, #a9ceff); border-right-color: #86aede; }
.grid .sorted { background: linear-gradient(#ffdca4, #ffad4c 60%, #ffd070); }
.grid td:first-child { background: #d6e6fc; }
.grid .filter td { background: #ffffdf; border-color: #e2e2cc; }
.grid .filter td:first-child { background: #d6e6fc; }
.grid .alt td { background: #e8edff; }
.grid .alt td:first-child { background: #d6e6fc; }
.grid .sel td { background: #3399ff; color: #fff; }
.grid .sel td:first-child { background: #d6e6fc; }
.grid .cur::before { content: ""; display: block; width: 0; border: 3px solid transparent; border-left: 4px solid #111; border-right: 0; }
.c-g { width: 11px; }
.editor .c-1 { width: 73px; }
.plan-win .c-g { width: 13px; }
.plan-win .c-1 { width: 66px; }
.plan-win .c-2 { width: 80px; }
.plan-win .c-3 { width: 67px; }
.plan-win .grid th, .plan-win .grid td { height: 16px; padding: 0 3px; line-height: 14px; }
.plan-win .grid .filter td { height: 17px; }
.plan-win .grid th { padding: 0 2px 0 3px; }
.asc { display: inline-block; vertical-align: 2px; border: 4px solid transparent; border-bottom: 4px solid #111; border-top: 0; }

.btabs { flex: none; display: flex; height: 13px; background: #f0f0f0; }
.btabs button { padding: 0 2px; border-right: 1px solid #b4b4b4; border-top: 1px solid #b4b4b4; }
.btabs::after { content: ""; flex: 1; border-top: 1px solid #b4b4b4; }
.btabs .on { background: #fff; border-top-color: #fff; }

/* forms */
.fields { display: grid; align-items: center; }
.fields input, .lookup, .pick, .focus { min-width: 0; border: 1px solid #dfe2e8; border-top-color: #b0b3ba; background: #fff; }
.plan-win .fields { grid-template-columns: 64px 1fr; grid-auto-rows: 19px; padding: 1px 3px 0 3px; }
.plan-win .fields input, .plan-win .lookup { height: 17px; padding: 0 3px; }
.line-win .fields { grid-template-columns: 72px 1fr; grid-auto-rows: 22px; padding: 2px 4px 0 4px; }
.line-win .fields input, .line-win .lookup, .line-win .pick, .line-win .focus { height: 19px; padding: 0 4px; }
.line-win .fields input { background: #f0f0f0; box-shadow: inset 0 0 0 1px #fafafa; }
.fields .lookup { display: flex; align-items: center; }
.window .fields .lookup { padding: 0 1px 0 0; }
.window .fields .lookup input { flex: 1; height: 15px; border: 0; background: #fff; box-shadow: none; }
.lookup button { width: 15px; height: 14px; line-height: 8px; font-weight: 700; border: 1px solid #5c7ea8; border-radius: 2px; background: linear-gradient(#e4f0ff, #a9cbf6); }
.fields .short { width: 111px; }
.fields .mid { width: 122px; }
.fields .num { text-align: right; }
.pick { display: flex; align-items: center; justify-content: space-between; }
.window .fields .pick { background: #f0f0f0; border: 1px solid #b0b0b0; padding: 0 1px 0 4px; border-radius: 1px; }
.pick select { flex: 1; opacity: 1; }
.pick.off { color: #7a7a7a; }
.pick > svg { width: 8px; height: 4px; margin-right: 3px; }
.pick span { display: flex; align-items: center; justify-content: center; width: 15px; height: 15px; border: 1px solid #777; border-radius: 2px; background: #f8f8f8; }
.pick span svg { width: 8px; height: 5px; }
.fields .focus { display: flex; align-items: center; justify-content: flex-end; border: 1px solid #7ab2e4; border-radius: 2px; background: #f0f0f0; }
.window .fields .focus input { width: 7px; height: 13px; padding: 0; border: 0; border-right: 1px solid #e08020; background: #3399ff; color: #fff; box-shadow: none; }

.ttabs { flex: none; display: flex; height: 17px; padding-left: 3px; }
.ttabs button { padding: 0 5px; border: 1px solid #8c9098; border-bottom: 0; background: #fff; }
.panel { flex: 1; min-height: 0; display: flex; flex-direction: column; margin: 0 3px 2px; padding: 1px 2px 2px; border: 1px solid #9a9ea6; background: #fff; }
.panel .toolbar { height: 37px; gap: 10px; background: #f0f0f0; }
.panel .toolbar button { gap: 3px; }
.panel .toolbar svg { width: 23px; height: 23px; }
.panel .btabs { height: 17px; background: #fff; }
.panel .btabs .on { border-bottom: 1px solid #b4b4b4; }

/* taskbar */
.taskbar {
  flex: none; display: flex; align-items: center; height: 29px; border-top: 1px solid #3c6ca4;
  background: linear-gradient(58deg, transparent calc(100% - 104px), #3c70bc calc(100% - 92px), #0c4494 calc(100% - 84px), #0b3f8c) 0 0 / 100% 100%,
    linear-gradient(90deg, #0b3d70 0, #1456a0 8%, #085cc0 22%, #0a5cc0 70%, #0c54b4);
}
.start { margin-left: 5px; }
.start svg { width: 27px; height: 27px; }
.ie { margin-left: 20px; }
.ie svg { width: 24px; height: 24px; }
.task { display: flex; align-items: center; justify-content: center; width: 41px; height: 27px; margin-left: 3px; border: 1px solid #7ca4d4; background: linear-gradient(120deg, #9cb8dc, #3464a8 45%, #4c78b8); }
.task svg { width: 24px; height: 24px; }
.tray { display: flex; align-items: center; gap: 6px; margin-left: auto; color: #fff; font-size: 9px; }
.tray span { margin-right: 3px; }
.tray svg { width: 12px; height: 11px; fill: #fff; }
.tray svg:last-child { width: 8px; }
```
